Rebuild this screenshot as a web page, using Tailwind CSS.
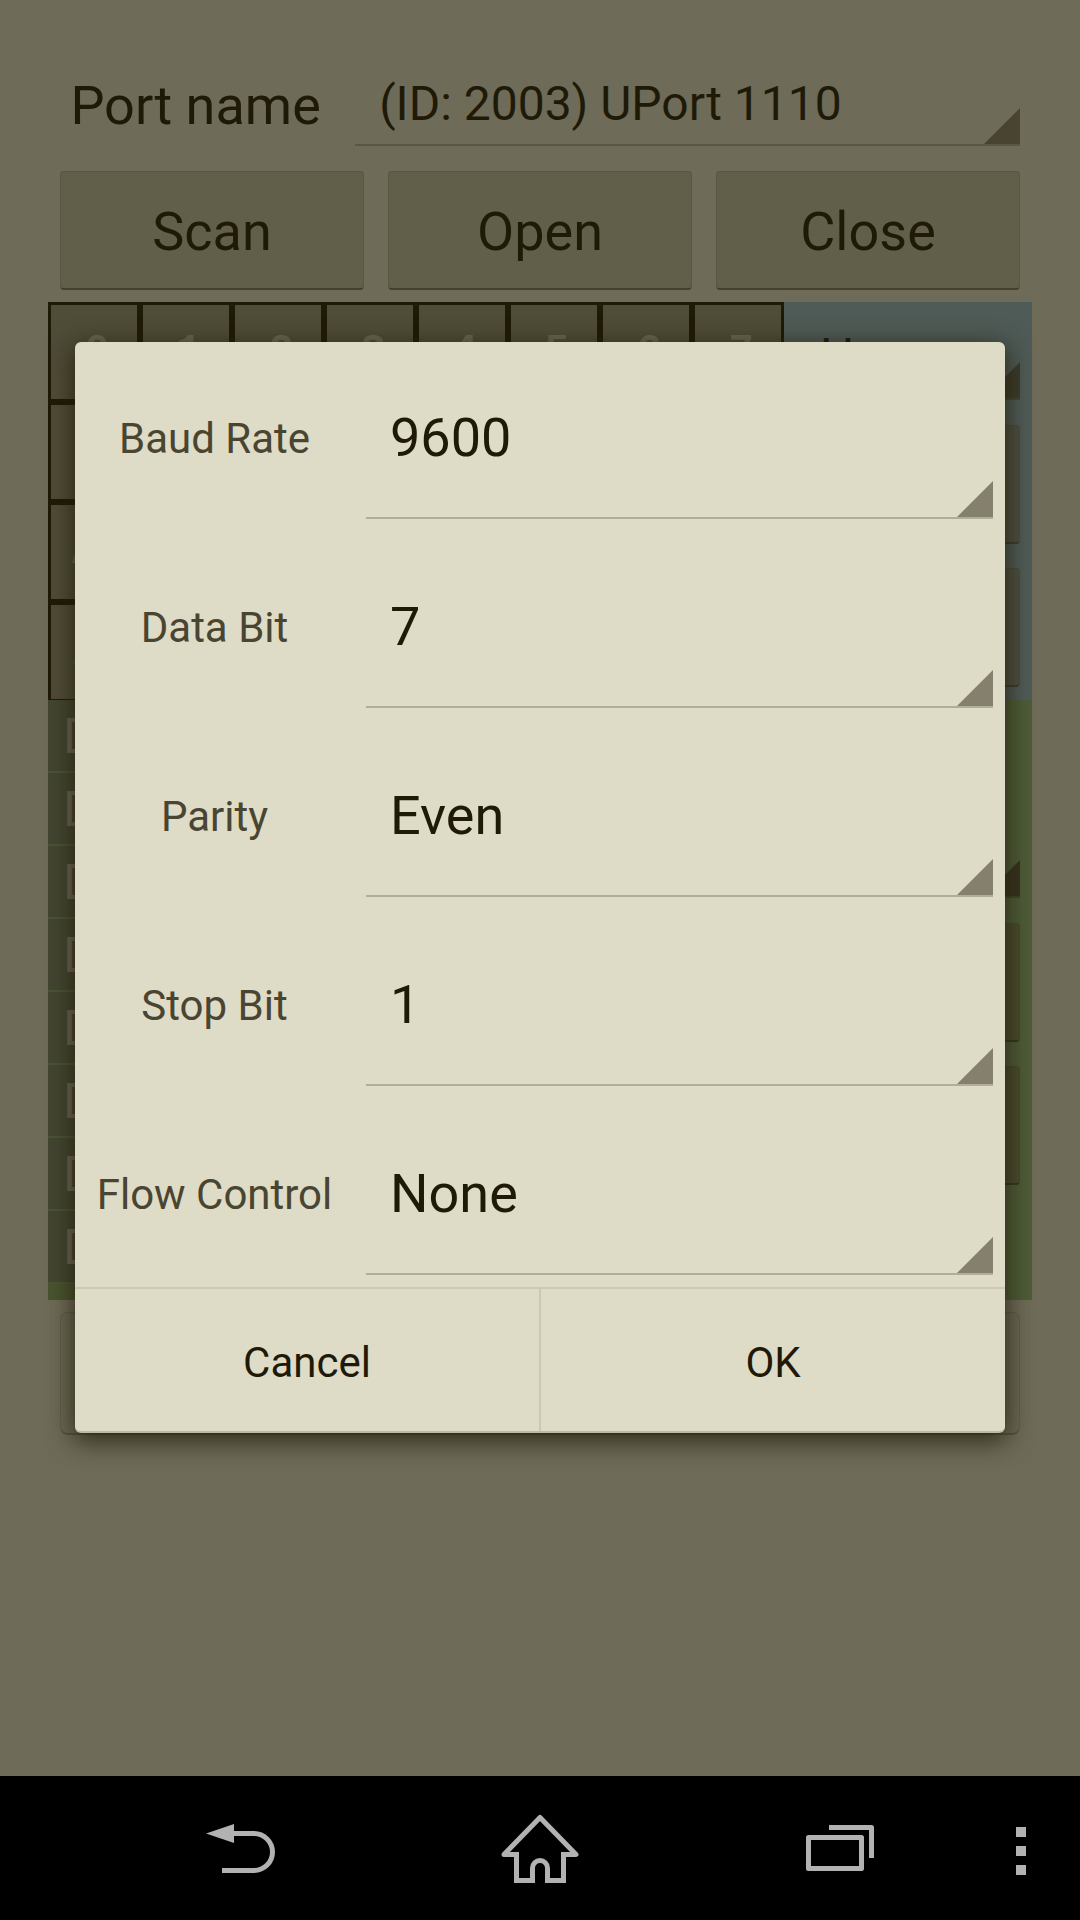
<!DOCTYPE html>
<html lang="en">
<head>
  <meta charset="UTF-8">
  <meta name="viewport" content="width=device-width, initial-scale=1">
  <title>Port settings</title>
  <script src="https://cdn.jsdelivr.net/npm/@tailwindcss/browser@4"></script>
</head>
<body class="min-h-screen flex flex-col bg-[#6e6b58] text-[#1f1a08] font-[Roboto,sans-serif]">
  <div class="relative flex-1">

    <!-- Main screen -->
    <main class="px-12 pt-12">
      <div class="flex items-center">
        <label for="port" class="w-[30%] pt-1.5 text-center text-[54px] leading-[64px]">Port name</label>
        <div class="relative flex-1 m-3">
          <select id="port" class="block w-full h-[86px] pt-1 pl-6 appearance-none border-b-2 border-[#5b5743] text-[48px]">
            <option>(ID: 2003) UPort 1110</option>
          </select>
          <span class="absolute right-0 bottom-0.5 size-9 bg-[#484431] pointer-events-none [clip-path:polygon(100%_0,100%_100%,0_100%)]"></span>
        </div>
      </div>

      <div class="grid grid-cols-3 gap-6 px-3 pt-[13px] pb-3">
        <button class="h-[119px] pt-1 rounded-sm bg-[#615e4a] border border-b-2 border-[#5a5642] border-b-[#454130] text-[54px] leading-[64px]">Scan</button>
        <button class="h-[119px] pt-1 rounded-sm bg-[#615e4a] border border-b-2 border-[#5a5642] border-b-[#454130] text-[54px] leading-[64px]">Open</button>
        <button class="h-[119px] pt-1 rounded-sm bg-[#615e4a] border border-b-2 border-[#5a5642] border-b-[#454130] text-[54px] leading-[64px]">Close</button>
      </div>

      <div class="flex">
        <div class="flex-1">
          <div id="keypad" class="grid grid-cols-8 auto-rows-[94px] gap-1.5 h-[398px] overflow-hidden border-[3px] border-b-0 border-[#1f1a08] bg-[#1f1a08]"></div>
          <ul id="lines" class="h-[600px] bg-[#48542f]"></ul>
        </div>
        <div class="w-[248px]">
          <div class="h-[398px] px-3 bg-[#4f5b57]">
            <div class="relative">
              <select aria-label="Format" class="block w-full h-[98px] pt-3 pl-6 appearance-none border-b-2 border-[#43473c] text-[48px]">
                <option>Hex</option>
              </select>
              <span class="absolute right-0 bottom-0.5 size-9 bg-[#3c3b2b] pointer-events-none [clip-path:polygon(100%_0,100%_100%,0_100%)]"></span>
            </div>
            <button aria-label="Send" class="block w-full h-[119px] mt-[25px] rounded-sm bg-[#4e5042] border border-b-2 border-[#484c41] border-b-[#3a3c30]"></button>
            <button aria-label="Clear" class="block w-full h-[119px] mt-6 rounded-sm bg-[#4e5042] border border-b-2 border-[#484c41] border-b-[#3a3c30]"></button>
          </div>
          <div class="h-[600px] px-3 bg-[#4e5c38]">
            <div class="relative pt-[100px]">
              <select aria-label="Line" class="block w-full h-[98px] appearance-none border-b-2 border-[#3f4628]"></select>
              <span class="absolute right-0 bottom-0.5 size-9 bg-[#37331e] pointer-events-none [clip-path:polygon(100%_0,100%_100%,0_100%)]"></span>
            </div>
            <button aria-label="On" class="block w-full h-[119px] mt-[25px] rounded-sm bg-[#4b4c30] border border-b-2 border-[#464a2c] border-b-[#353820]"></button>
            <button aria-label="Off" class="block w-full h-[119px] mt-6 rounded-sm bg-[#4b4c30] border border-b-2 border-[#464a2c] border-b-[#353820]"></button>
          </div>
        </div>
      </div>

      <div class="p-3">
        <button aria-label="Settings" class="block w-full h-[123px] rounded-lg bg-[#6c6956] border border-b-2 border-[#625e4b] border-b-[#57533f]"></button>
      </div>
    </main>

    <!-- Settings dialog -->
    <div class="absolute inset-0 flex items-center px-[75px] pb-px">
      <form role="dialog" aria-label="Port settings" class="w-full rounded-md overflow-hidden bg-[#dedbc7] border-b-2 border-[#bdb9a4] shadow-[0_6px_26px_2px_rgb(31_26_8/0.8)]">
        <div class="flex items-center h-[189px]">
          <label for="baud" class="w-[30%] pt-1 text-center text-[42px] leading-[50px] text-[#4a4531]">Baud Rate</label>
          <div class="relative flex-1 h-full pr-3 pb-3 pl-3">
            <select id="baud" class="block w-full h-full pt-4 pl-6 appearance-none border-b-2 border-[#b0ad9a] text-[54px]">
              <option>9600</option>
            </select>
            <span class="absolute right-3 bottom-3.5 size-9 bg-[#84806d] pointer-events-none [clip-path:polygon(100%_0,100%_100%,0_100%)]"></span>
          </div>
        </div>
        <div class="flex items-center h-[189px]">
          <label for="data" class="w-[30%] pt-1 text-center text-[42px] leading-[50px] text-[#4a4531]">Data Bit</label>
          <div class="relative flex-1 h-full pr-3 pb-3 pl-3">
            <select id="data" class="block w-full h-full pt-4 pl-6 appearance-none border-b-2 border-[#b0ad9a] text-[54px]">
              <option>7</option>
            </select>
            <span class="absolute right-3 bottom-3.5 size-9 bg-[#84806d] pointer-events-none [clip-path:polygon(100%_0,100%_100%,0_100%)]"></span>
          </div>
        </div>
        <div class="flex items-center h-[189px]">
          <label for="parity" class="w-[30%] pt-1 text-center text-[42px] leading-[50px] text-[#4a4531]">Parity</label>
          <div class="relative flex-1 h-full pr-3 pb-3 pl-3">
            <select id="parity" class="block w-full h-full pt-4 pl-6 appearance-none border-b-2 border-[#b0ad9a] text-[54px]">
              <option>Even</option>
            </select>
            <span class="absolute right-3 bottom-3.5 size-9 bg-[#84806d] pointer-events-none [clip-path:polygon(100%_0,100%_100%,0_100%)]"></span>
          </div>
        </div>
        <div class="flex items-center h-[189px]">
          <label for="stop" class="w-[30%] pt-1 text-center text-[42px] leading-[50px] text-[#4a4531]">Stop Bit</label>
          <div class="relative flex-1 h-full pr-3 pb-3 pl-3">
            <select id="stop" class="block w-full h-full pt-4 pl-6 appearance-none border-b-2 border-[#b0ad9a] text-[54px]">
              <option>1</option>
            </select>
            <span class="absolute right-3 bottom-3.5 size-9 bg-[#84806d] pointer-events-none [clip-path:polygon(100%_0,100%_100%,0_100%)]"></span>
          </div>
        </div>
        <div class="flex items-center h-[189px]">
          <label for="flow" class="w-[30%] pt-1 text-center text-[42px] leading-[50px] text-[#4a4531]">Flow Control</label>
          <div class="relative flex-1 h-full pr-3 pb-3 pl-3">
            <select id="flow" class="block w-full h-full pt-4 pl-6 appearance-none border-b-2 border-[#b0ad9a] text-[54px]">
              <option>None</option>
            </select>
            <span class="absolute right-3 bottom-3.5 size-9 bg-[#84806d] pointer-events-none [clip-path:polygon(100%_0,100%_100%,0_100%)]"></span>
          </div>
        </div>
        <div class="flex h-36 border-t-2 border-[#ccc8b4]">
          <button type="button" class="flex-1 pt-1.5 border-r-2 border-[#ccc8b4] text-[42px] leading-[50px]">Cancel</button>
          <button type="button" class="flex-1 pt-1.5 text-[42px] leading-[50px]">OK</button>
        </div>
      </form>
    </div>
  </div>

  <!-- Android navigation bar -->
  <nav class="flex h-36 pl-[90px] pr-7 bg-black text-[#b2b2b2]">
    <button aria-label="Back" class="flex-1 flex items-center justify-center">
      <svg class="size-24" viewBox="0 0 96 96" fill="none" stroke="currentColor" stroke-width="5">
        <path d="M40 33.5H62a18.5 18.5 0 0 1 0 37H30"/>
        <path d="M14 33.5L42 24v19z" fill="currentColor" stroke="none"/>
      </svg>
    </button>
    <button aria-label="Home" class="flex-1 flex items-center justify-center">
      <svg class="size-24" viewBox="0 0 96 96" fill="none" stroke="currentColor" stroke-width="5">
        <path d="M24.5 54.5H12L48 17.5L84 54.5H71.5" stroke-linejoin="round"/>
        <path d="M24.5 52V80.5H40.5V68a7.5 7.5 0 0 1 15 0V80.5H71.5V52"/>
      </svg>
    </button>
    <button aria-label="Recent apps" class="flex-1 flex items-center justify-center">
      <svg class="size-24" viewBox="0 0 96 96" fill="none" stroke="currentColor" stroke-width="5" stroke-linejoin="round">
        <rect x="16.5" y="37.5" width="53" height="31"/>
        <path d="M37 27.5H79.5V58"/>
      </svg>
    </button>
    <button aria-label="Menu" class="w-[62px] pt-1.5 flex flex-col items-center justify-center gap-[9px]">
      <span class="size-2.5 bg-[#b2b2b2]"></span>
      <span class="size-2.5 bg-[#b2b2b2]"></span>
      <span class="size-2.5 bg-[#b2b2b2]"></span>
    </button>
  </nav>

  <script>
    // Keypad: digits on the first row, function keys at the start of rows 3 and 4
    const keys = ['0', '1', '2', '3', '4', '5', '6', '7'];
    keys[16] = 'AF';
    keys[24] = '/K';
    const keypad = document.getElementById('keypad');
    for (let i = 0; i < 32; i++) {
      keypad.innerHTML += '<button class="pl-1.5 bg-[#4f4c38] text-[#6b6853] text-[42px] leading-[50px] font-bold font-[Liberation_Mono,monospace]">' + (keys[i] || '') + '</button>';
    }

    // Serial line list
    const lines = document.getElementById('lines');
    for (let i = 0; i < 8; i++) {
      lines.innerHTML += '<li class="h-[73px] pl-4 pt-2 bg-[#434632] border-b-2 border-[#4b5536] text-[48px] leading-[56px] text-[#6b6853] font-[DejaVu_Sans_Mono,monospace]">D</li>';
    }
  </script>
</body>
</html>
